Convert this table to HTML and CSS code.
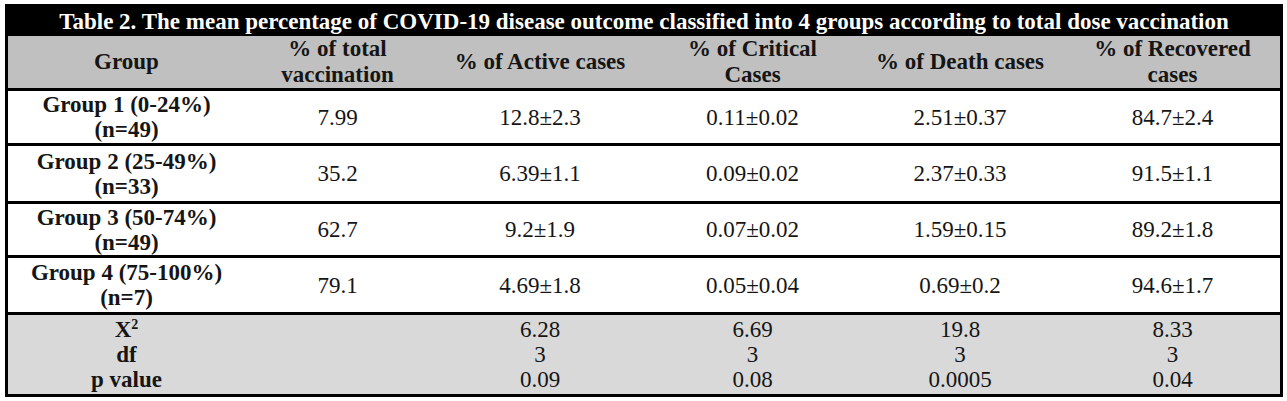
FILE: index.html
```html
<!DOCTYPE html>
<html>
<head>
<meta charset="utf-8">
<link rel="stylesheet" href="styles.css">
</head>
<body>
<table class="tbl">
  <colgroup>
    <col class="c1"><col class="c2"><col class="c3"><col class="c4"><col class="c5"><col class="c6">
  </colgroup>
  <tr class="title-row">
    <td colspan="6">Table 2. The mean percentage of COVID-19 disease outcome classified into 4 groups according to total dose vaccination</td>
  </tr>
  <tr class="head-row">
    <th>Group</th>
    <th>% of total<br>vaccination</th>
    <th>% of Active cases</th>
    <th>% of Critical<br>Cases</th>
    <th>% of Death cases</th>
    <th>% of Recovered<br>cases</th>
  </tr>
  <tr class="row r1">
    <td class="grp">Group 1 (0-24%)<br>(n=49)</td>
    <td>7.99</td><td>12.8±2.3</td><td>0.11±0.02</td><td>2.51±0.37</td><td>84.7±2.4</td>
  </tr>
  <tr class="row r2">
    <td class="grp">Group 2 (25-49%)<br>(n=33)</td>
    <td>35.2</td><td>6.39±1.1</td><td>0.09±0.02</td><td>2.37±0.33</td><td>91.5±1.1</td>
  </tr>
  <tr class="row r3">
    <td class="grp">Group 3 (50-74%)<br>(n=49)</td>
    <td>62.7</td><td>9.2±1.9</td><td>0.07±0.02</td><td>1.59±0.15</td><td>89.2±1.8</td>
  </tr>
  <tr class="row r4">
    <td class="grp">Group 4 (75-100%)<br>(n=7)</td>
    <td>79.1</td><td>4.69±1.8</td><td>0.05±0.04</td><td>0.69±0.2</td><td>94.6±1.7</td>
  </tr>
  <tr class="stats-row">
    <td class="grp">X<sup>2</sup><br>df<br>p value</td>
    <td></td>
    <td>6.28<br>3<br>0.09</td>
    <td>6.69<br>3<br>0.08</td>
    <td>19.8<br>3<br>0.0005</td>
    <td>8.33<br>3<br>0.04</td>
  </tr>
</table>
</body>
</html>
```

FILE: styles.css
```css
html, body {
  margin: 0;
  padding: 0;
  background: #ffffff;
}
body {
  font-family: "Liberation Serif", "Times New Roman", serif;
  color: #151515;
}
.tbl {
  margin: 4px 0 0 5px;
  width: 1278px;
  border: 3px solid #000;
  border-collapse: separate;
  border-spacing: 0;
  table-layout: fixed;
}
.c1 { width: 237px; }
.c2 { width: 185px; }
.c3 { width: 220px; }
.c4 { width: 205px; }
.c5 { width: 210px; }
.c6 { width: 215px; }
.tbl td, .tbl th {
  padding: 0;
  text-align: center;
  vertical-align: middle;
  font-size: 23px;
  line-height: 25px;
}
.title-row td {
  background: #000;
  color: #fff;
  font-weight: bold;
  font-size: 23px;
  height: 29px;
  line-height: 29px;
  white-space: nowrap;
}
.head-row th {
  background: #c0c0c0;
  font-weight: bold;
  height: 52px;
  line-height: 26px;
  border-bottom: 3px solid #000;
}
.row td {
  border-bottom: 3px solid #000;
  background: #fff;
}
.r1 td { height: 52px; }
.r2 td { height: 55px; }
.r3 td { height: 51px; }
.r4 td { height: 54px; }
.grp { font-weight: bold; }
.stats-row td {
  background: #d9d9d9;
  height: 79px;
}
.stats-row sup {
  font-size: 14px;
  line-height: 0;
  vertical-align: 8px;
}
```
